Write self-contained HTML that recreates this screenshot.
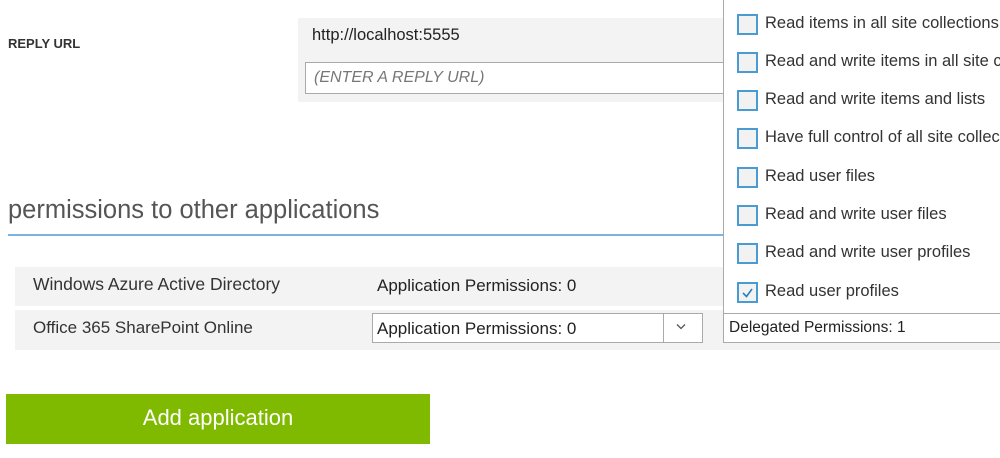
<!DOCTYPE html><html><head><style>
html,body{margin:0;width:1000px;height:458px;overflow:hidden}
body{background:#fff;position:relative;font-family:"Segoe UI","Liberation Sans",sans-serif;color:#222}
.a{position:absolute}
.cb{position:absolute;left:737px;width:17px;height:17px;border:2px solid #4a9bd1;background:#f2f2f2}
.lb{position:absolute;left:765px;font-size:16.5px;color:#333;white-space:nowrap}
</style></head><body>
<div class="a" style="left:8px;top:36px;font-size:13px;font-weight:bold;color:#333">REPLY URL</div>
<div class="a" style="left:298px;top:18px;width:430px;height:84px;background:#f3f3f3"></div>
<div class="a" style="left:312px;top:26px;font-size:16.5px;color:#222">http://localhost:5555</div>
<div class="a" style="left:305px;top:62px;width:425px;height:30px;background:#fff;border:1px solid #aaa"></div>
<div class="a" style="left:314px;top:69px;font-size:16px;font-style:italic;color:#777">(ENTER A REPLY URL)</div>
<div class="a" style="left:8px;top:196px;font-size:25.5px;color:#555">permissions to other applications</div>
<div class="a" style="left:8px;top:234px;width:720px;height:2px;background:#7ab2e0"></div>
<div class="a" style="left:15px;top:267px;width:985px;height:39px;background:#f3f3f3"></div>
<div class="a" style="left:15px;top:310px;width:985px;height:40px;background:#f3f3f3"></div>
<div class="a" style="left:33px;top:274px;font-size:17.5px;color:#333">Windows Azure Active Directory</div>
<div class="a" style="left:377px;top:276px;font-size:17px;color:#222">Application Permissions: 0</div>
<div class="a" style="left:33px;top:318px;font-size:17px;color:#333">Office 365 SharePoint Online</div>
<div class="a" style="left:372px;top:313px;width:329px;height:28px;background:#fff;border:1px solid #aaa"></div>
<div class="a" style="left:663px;top:314px;width:1px;height:28px;background:#aaa"></div>
<div class="a" style="left:377px;top:319px;font-size:17px;color:#222">Application Permissions: 0</div>
<svg class="a" style="left:676px;top:323px" width="10" height="8"><path d="M1 1.5L5 5.5L9 1.5" stroke="#555" stroke-width="1.3" fill="none"/></svg>
<div class="a" style="left:6px;top:394px;width:424px;height:50px;background:#7fba00;color:#fff;font-size:22px;text-align:center;line-height:48px">Add application</div>
<div class="a" style="left:723px;top:-1px;width:277px;height:343px;background:#fff;border-left:1px solid #aaa;border-bottom:1px solid #aaa"></div>
<div class="cb" style="top:14px"></div><div class="lb" style="top:14px">Read items in all site collections</div>
<div class="cb" style="top:52px"></div><div class="lb" style="top:52px">Read and write items in all site collections</div>
<div class="cb" style="top:90px"></div><div class="lb" style="top:90px">Read and write items and lists</div>
<div class="cb" style="top:128px"></div><div class="lb" style="top:128px">Have full control of all site collections</div>
<div class="cb" style="top:167px"></div><div class="lb" style="top:167px">Read user files</div>
<div class="cb" style="top:205px"></div><div class="lb" style="top:205px">Read and write user files</div>
<div class="cb" style="top:243px"></div><div class="lb" style="top:243px">Read and write user profiles</div>
<div class="cb" style="top:282px"></div><div class="lb" style="top:282px">Read user profiles</div>
<svg class="a" style="left:739px;top:284px" width="17" height="17"><path d="M4 9L7.5 12.5L13 5" stroke="#2a7fc0" stroke-width="1.6" fill="none"/></svg>
<div class="a" style="left:723px;top:313px;width:277px;height:28px;border-top:1px solid #aaa;border-left:1px solid #aaa;border-bottom:1px solid #aaa;background:#fff"></div>
<div class="a" style="left:729px;top:319px;font-size:15.5px;color:#222">Delegated Permissions: 1</div>
</body></html>
